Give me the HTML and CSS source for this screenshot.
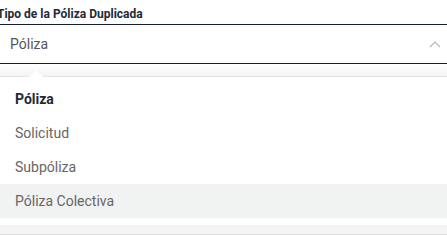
FILE: index.html
```html
<!DOCTYPE html>
<html lang="es">
<head>
    <meta charset="UTF-8">
    <meta name="viewport" content="width=device-width, initial-scale=1.0">
    <title>Tipo de la Póliza Duplicada</title>
    <link rel="stylesheet" href="styles.css">
</head>
<body>
    <div class="field">
        <label class="field-label">Tipo de la Póliza Duplicada</label>
        <div class="select">
            <span class="select-value">Póliza</span>
            <svg class="chevron" width="12" height="8" viewBox="0 0 12 8">
                <polyline points="1,7 6,2 11,7" fill="none" stroke="#b5b5b5" stroke-width="1.2"/>
            </svg>
        </div>
    </div>

    <div class="dropdown">
        <div class="dropdown-shadow"></div>
        <ul class="options">
            <li class="option selected">Póliza</li>
            <li class="option">Solicitud</li>
            <li class="option">Subpóliza</li>
            <li class="option hover">Póliza Colectiva</li>
        </ul>
        <div class="dropdown-footer"></div>
    </div>
</body>
</html>
```

FILE: styles.css
```css
body {
    font-family: Roboto, "Liberation Sans", Arial, sans-serif;
    background-color: white;
    margin: 0;
    padding: 0;
    overflow: hidden;
}
.field {
    padding-top: 6px;
}
.field-label {
    display: block;
    margin-left: -3px;
    font-size: 12px;
    font-weight: bold;
    line-height: 16px;
    color: #1f2a36;
    height: 18px;
}
.select {
    display: flex;
    align-items: center;
    justify-content: space-between;
    height: 38px;
    padding: 0 6px 0 10px;
    border-top: 1px solid #16212c;
    border-bottom: 1px solid #16212c;
}
.select-value {
    font-size: 14px;
    color: #555555;
}
.chevron {
    display: block;
    margin-top: -1px;
}
.dropdown {
    position: relative;
}
.dropdown-shadow {
    height: 12px;
    background-image: linear-gradient(to bottom, #ffffff, #f4f4f4);
    border-bottom: 1px solid #e4e4e4;
}
.dropdown-shadow::after {
    content: '';
    position: absolute;
    left: 29px;
    top: 6px;
    width: 0;
    height: 0;
    border-left: 7px solid transparent;
    border-right: 7px solid transparent;
    border-bottom: 7px solid #ffffff;
}
.options {
    list-style: none;
    margin: 0;
    padding: 5px 0 0;
}
.option {
    height: 34px;
    line-height: 34px;
    padding-left: 15px;
    font-size: 14px;
    color: #666666;
}
.option.selected {
    font-weight: bold;
    color: #1f2a36;
}
.option.hover {
    background-color: #f1f3f3;
}
.dropdown-footer {
    margin-top: 7px;
    height: 9px;
    background-color: #f4f4f4;
    border-bottom: 1px solid #dcdcdc;
}
```
